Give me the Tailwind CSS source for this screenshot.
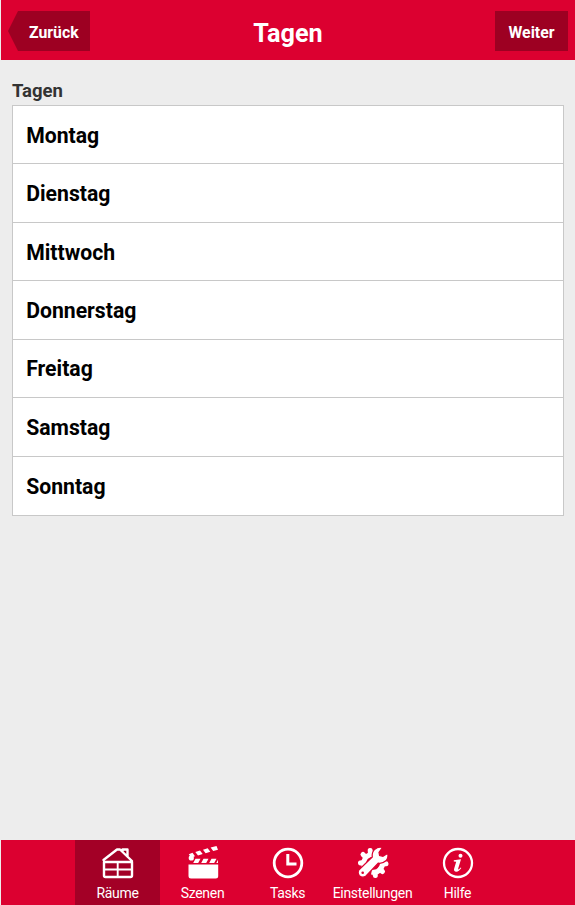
<!DOCTYPE html>
<html lang="de">
<head>
<meta charset="utf-8">
<title>Tagen</title>
<script src="https://cdn.jsdelivr.net/npm/@tailwindcss/browser@4"></script>
</head>
<body class="bg-[#ededed] font-[Roboto,sans-serif]">
<div class="flex flex-col h-[905px] w-[575px] pl-px overflow-hidden">
  <header class="h-[60px] shrink-0 bg-[#dc0030] grid grid-cols-[1fr_auto_1fr] items-center pl-[7px] pr-[7px] pt-[2px] text-white font-bold">
    <div class="relative w-[82px] h-10 pl-[21px] flex items-center text-[15.8px]">
      <svg class="absolute inset-0" width="82" height="40" viewBox="0 0 82 40"><path d="M0 20L10 0H82V40H10Z" fill="#9d0022"/></svg>
      <span class="relative pt-[3px]">Zurück</span>
    </div>
    <h1 class="text-[25.2px] leading-[30px] pt-[6px]">Tagen</h1>
    <div class="justify-self-end w-[73px] h-10 bg-[#9d0022] flex items-center justify-center pt-[3px] text-[15.8px]">Weiter</div>
  </header>
  <main class="flex-1 pl-[11px] pr-[11px] pt-[20px]">
    <h2 class="text-[18.5px] leading-[22px] font-bold text-[#333] mb-[3px]">Tagen</h2>
    <ul class="border border-[#c8c8c8] bg-white divide-y divide-[#c8c8c8] h-[411px] grid grid-rows-7 text-[21.2px] font-bold text-black *:flex *:items-center *:pl-[13.2px] *:pt-[1.8px]">
      <li>Montag</li>
      <li>Dienstag</li>
      <li>Mittwoch</li>
      <li>Donnerstag</li>
      <li>Freitag</li>
      <li>Samstag</li>
      <li>Sonntag</li>
    </ul>
  </main>
  <nav class="h-[65px] shrink-0 bg-[#dc0030] flex pl-[74px] text-white text-[14px] tracking-[-0.3px] leading-4 *:w-[85px] *:pt-[5px] *:flex *:flex-col *:items-center *:gap-[4px]">
    <div class="bg-[#a30026]">
      <svg width="36" height="36" viewBox="0 0 36 36" fill="none" stroke="#fff" stroke-width="2.400" stroke-linejoin="round" stroke-linecap="round"><path d="M4 17V30.500Q4 32 5.500 32H30.500Q32 32 32 30.500V17ZM3.500 15L17 4.500L20 4.500L32 16M22.500 6V4.500H27.500V11"/><path d="M4 24.500H32M17.700 17V32" stroke-width="1.900"/></svg>
      <span>Räume</span>
    </div>
    <div>
      <svg width="36" height="36" viewBox="0 0 36 36" fill="#fff"><path d="M3.500 19.500H33.200V31Q33.200 33.500 30.700 33.500H6Q3.500 33.500 3.500 31Z"/><circle cx="6.300" cy="12.900" r="2.600"/><path d="M10.500 13.700H15.500L13.200 18H8.200ZM18.500 13.700H23.500L21.200 18H16.200ZM26.500 13.700H31.500L29.200 18H24.200ZM33 14.800V18H31.300Z"/><path d="M3.800 9.200L7.500 7.800L10 11.200L6 12.500ZM10.300 6.900L15 5.500L17.700 9L13 10.400ZM18 4.700L22.700 3.300L25.300 6.800L20.600 8.200ZM25.600 2.500L31.500 1L33 4.800L28.200 6.100Z"/></svg>
      <span>Szenen</span>
    </div>
    <div>
      <svg width="36" height="36" viewBox="0 0 36 36" fill="none" stroke="#fff"><circle cx="18" cy="18" r="13.800" stroke-width="2.800"/><path d="M17.800 9V19H26.500" stroke-width="3"/></svg>
      <span>Tasks</span>
    </div>
    <div>
      <svg width="36" height="36" viewBox="0 0 36 36">
        <g fill="none" stroke="#fff"><path d="M9 21.500Q8 15 11.300 12T19.500 9" stroke-width="5"/><path d="M8.500 17.500L5.500 18M10.500 12L8 9.500M15.500 9L15.200 5.500" stroke-width="5" stroke-linecap="round"/><path d="M16.500 27Q22 28 25 24.500T27.500 17.500" stroke-width="5"/><path d="M20 27.500L20.300 30.500M25 24.500L27.500 26.500M27.500 19L31 18.700" stroke-width="5" stroke-linecap="round"/></g>
        <path d="M4.300 24.500L17.300 12Q16.600 7.500 19.900 4.200Q23 1.300 27.500 2.500L24 7.300L24.600 10.600L27.900 11.300L32.800 8.200Q33.700 12.900 30.900 15.800Q27.500 18.900 23.200 18.200L11 31Q7.500 33.500 4.300 30.700Q2 27.500 4.300 24.500Z" fill="#fff" stroke="#dc0030" stroke-width="1.200"/>
        <circle cx="7.700" cy="27.800" r="1.300" fill="#dc0030"/>
      </svg>
      <span>Einstellungen</span>
    </div>
    <div>
      <svg width="36" height="36" viewBox="0 0 36 36" fill="none" stroke="#fff"><circle cx="18" cy="18" r="14" stroke-width="2.300"/><circle cx="20.500" cy="10.700" r="2" fill="#fff" stroke="none"/><path d="M13.800 15.300L21 14.300L18.200 23.500Q18 24.700 19 24.300L20.700 22.500L21.300 23Q19 26.700 16.300 26.700Q13.300 26.500 14.200 23.500L16.200 16.800L13.800 16.400Z" fill="#fff" stroke="none"/></svg>
      <span>Hilfe</span>
    </div>
  </nav>
</div>
</body>
</html>
